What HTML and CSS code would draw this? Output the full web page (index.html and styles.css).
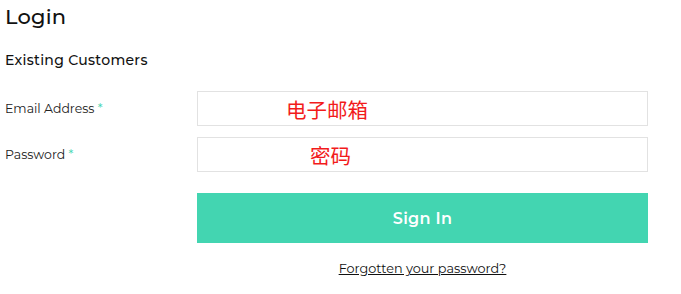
FILE: index.html
```html
<!DOCTYPE html>
<html>
<head>
<meta charset="utf-8">
<link rel="stylesheet" href="styles.css">
</head>
<body>
<div class="page">
  <h1 class="title">Login</h1>
  <h2 class="subtitle">Existing Customers</h2>
  <div class="form">
    <div class="row">
      <label class="label">Email Address <span class="req">*</span></label>
      <div class="field"><span class="ph ph-email">电子邮箱</span></div>
    </div>
    <div class="row">
      <label class="label">Password <span class="req">*</span></label>
      <div class="field"><span class="ph ph-pass">密码</span></div>
    </div>
    <div class="row row-btn">
      <div class="spacer"></div>
      <div class="actions">
        <button class="btn">Sign In</button>
        <a class="forgot" href="#">Forgotten your password?</a>
      </div>
    </div>
  </div>
</div>
</body>
</html>
```

FILE: styles.css
```css
html, body { margin: 0; padding: 0; background: #fff; }
body { font-family: "Montserrat", "Inter", "Noto Sans", sans-serif; color: #111; }
.page { padding: 4px 0 0 5px; width: 643px; }
.title { margin: 0; font-size: 21px; font-weight: 500; line-height: 26px; letter-spacing: 0.2px; }
.subtitle { margin: 21px 0 0; font-size: 14px; font-weight: 500; line-height: 18px; letter-spacing: 0.3px; }
.form { margin-top: 22px; display: flex; flex-direction: column; gap: 11px; }
.row { display: grid; grid-template-columns: 192px 451px; align-items: center; }
.label { font-size: 12.5px; color: #222; }
.req { color: #43d5b1; }
.field { height: 33px; border: 1px solid #e2e2e2; box-sizing: content-box; display: flex; align-items: center; }
.ph { color: #f21b1b; font-family: "Noto Sans CJK SC", sans-serif; font-size: 20.5px; line-height: 24px; }
.ph-email { margin-left: 88px; }
.ph-pass { margin-left: 112px; }
.row-btn { margin-top: 10px; align-items: start; }
.actions { display: flex; flex-direction: column; align-items: center; }
.btn { width: 451px; height: 50px; border: none; background: #43d5b1; color: #fff; font-family: inherit; font-weight: 600; font-size: 16px; letter-spacing: 0.3px; padding: 0; }
.forgot { margin-top: 18px; font-size: 12.8px; color: #111; text-decoration: underline; }
```
